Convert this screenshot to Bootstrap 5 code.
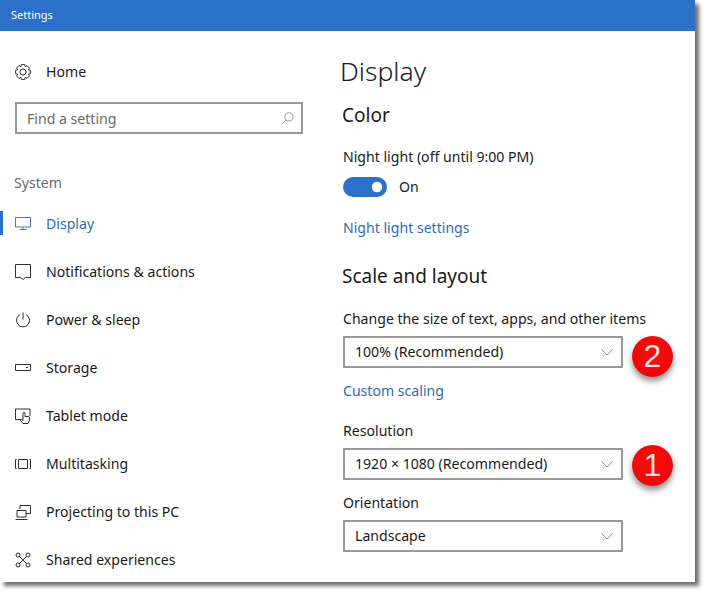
<!DOCTYPE html>
<html lang="en">
<head>
<meta charset="utf-8">
<title>Settings</title>
<link href="https://cdn.jsdelivr.net/npm/bootstrap@5.3.0/dist/css/bootstrap.min.css" rel="stylesheet">
<style>
html,body{height:100%;background:#fff}
body{font-family:"Noto Sans","Open Sans",sans-serif;font-size:14.1px;color:#1a1a1a;line-height:20px;overflow:hidden}
.win{width:695px;height:582px;background:#fff;box-shadow:4px 4px 4px #6e6e6e;overflow:hidden}
.titlebar{height:31px;flex:none;background:#2b70c9;color:#fff;font-size:11px;padding-left:11px;line-height:30px}
.side{width:318px;flex:none}
.home{height:24px;margin-top:29px;padding-left:15px;gap:15px}
.searchbox{margin:18px 15px 0;width:288px;height:32px;position:relative}
.searchbox .form-control{height:32px;border:2px solid #999;border-radius:0;padding:0 10px;font-size:14.1px;color:#666;box-shadow:none;font-family:inherit}
.searchbox .form-control::placeholder{color:#6b6b6b;opacity:1}
.searchbox svg{position:absolute;right:9px;top:10px;color:#777}
.syshead{color:#6b6b6b;margin:39px 0 0 14px;height:20px;line-height:20px}
.sysnav{margin-top:7px}
.sysnav .nav-link{height:48px;padding:0 0 0 15px;display:flex;align-items:center;gap:15px;color:#1a1a1a;position:relative}
.sysnav .nav-link.active{color:#2f6cb5}
.sysnav .nav-link.active::before{content:"";position:absolute;left:0;top:11px;width:3px;height:24px;background:#2b70c9}
.ico{flex:none;fill:none;stroke:currentColor;stroke-width:.9}
.main{padding-left:25px;flex:1;min-width:0}
.main h1{font-size:26.5px;font-weight:300;line-height:36px;margin:22px 0 0 -3px}
.main h2{font-size:19px;font-weight:400;line-height:26px;margin:0 0 0 -1px}
.h-color{margin-top:13px!important}
.lbl{height:20px;margin:0}
.nl{margin-top:19px}
.form-switch{padding:0;margin:10px 0 0;min-height:0;height:20px;display:flex;align-items:center;gap:12px}
.form-switch .form-check-input{width:44px;height:20px;margin:0;border:none;background-color:#2b70c9;border-radius:10px;box-shadow:none;background-image:url("data:image/svg+xml,%3csvg xmlns='http://www.w3.org/2000/svg' viewBox='-4 -4 8 8'%3e%3ccircle r='2.1' fill='%23fff'/%3e%3c/svg%3e")}
.form-switch .form-check-label{color:#1a1a1a}
.link{color:#2f6cb5;text-decoration:none;display:block}
.nlset{margin-top:21px}
.h-scale{margin-top:25px!important}
.chg{margin-top:20px}
.selwrap{width:280px;position:relative;margin-top:7px}
.selwrap .form-select{height:32px;border:2px solid #999;border-radius:0;padding:0 30px 0 10px;font-size:14.1px;color:#1a1a1a;font-family:inherit;box-shadow:none;background-position:right 8px center;background-size:12px 7px;background-image:url("data:image/svg+xml,%3csvg xmlns='http://www.w3.org/2000/svg' viewBox='0 0 12 7'%3e%3cpath fill='none' stroke='%23888' d='M.5.5l5.5 5.5L11.500.5'/%3e%3c/svg%3e")}
.scal{margin-top:13px}
.res{margin-top:20px}
.ori{margin-top:13px}
.pin{position:absolute;left:289px;width:41px;height:41px;border-radius:50%;background:radial-gradient(circle at 50% 40%,#f50d0d 0,#ee0a0a 60%,#d80808 100%);color:#f6dede;font-family:"Liberation Sans",sans-serif;font-size:32px;line-height:41px;text-align:center;box-shadow:0 4px 6px rgba(0,0,0,.45)}
.pin-two{top:0}
.pin-one{top:-3px}
</style>
</head>
<body>
<div class="win d-flex flex-column">
  <div class="titlebar">Settings</div>
  <div class="d-flex flex-grow-1">
    <div class="side">
      <div class="home d-flex align-items-center">
        <svg class="ico" width="16" height="16" viewBox="0 0 16 16"><polygon points="6.29,.6 9.71,.6 10.18,2.73 12.03,1.55 14.45,3.97 13.27,5.82 15.4,6.29 15.4,9.71 13.27,10.18 14.45,12.03 12.03,14.45 10.18,13.27 9.71,15.4 6.29,15.4 5.82,13.27 3.97,14.45 1.55,12.03 2.73,10.18 .6,9.71 .6,6.29 2.73,5.82 1.55,3.97 3.97,1.55 5.82,2.73"/><circle cx="8" cy="8" r="3"/></svg>
        <span>Home</span>
      </div>
      <div class="searchbox">
        <input class="form-control" type="text" placeholder="Find a setting">
        <svg class="ico" width="13" height="13" viewBox="0 0 16 16"><circle cx="9.800" cy="6" r="5"/><path d="M6.200 9.800L.7 15.300"/></svg>
      </div>
      <div class="syshead">System</div>
      <nav class="nav flex-column sysnav">
        <a class="nav-link active" href="#">
          <svg class="ico" width="16" height="16" viewBox="0 0 16 16"><path d="M.5 1.500h15v9.500H.5zM8 11v3M4.500 13.500h7"/></svg>
          <span>Display</span></a>
        <a class="nav-link" href="#">
          <svg class="ico" width="16" height="16" viewBox="0 0 16 16"><path d="M.5.5h15v13h-5L8 15.500 5.500 13.500H.5z"/></svg>
          <span>Notifications &amp; actions</span></a>
        <a class="nav-link" href="#">
          <svg class="ico" width="16" height="16" viewBox="0 0 16 16"><path d="M5.200 2.500a6.500 6.500 0 1 0 5.600 0M8 .5v7"/></svg>
          <span>Power &amp; sleep</span></a>
        <a class="nav-link" href="#">
          <svg class="ico" width="16" height="16" viewBox="0 0 16 16"><path d="M.5 4.500h15v6H.5zM11 7.500h2"/></svg>
          <span>Storage</span></a>
        <a class="nav-link" href="#">
          <svg class="ico" width="16" height="16" viewBox="0 0 16 16"><path d="M6 11.500H.5V1h14.500v7"/><path d="M8 15.500l-2.500-3 1-1 1.500 1V5.500a1 1 0 0 1 2 0V8.500h3.500a1 1 0 0 1 1 1v3l-1.500 3z"/></svg>
          <span>Tablet mode</span></a>
        <a class="nav-link" href="#">
          <svg class="ico" width="16" height="16" viewBox="0 0 16 16"><path d="M3.500 3.500h9v9h-9zM1.500 3.500H.5v9h1M14.500 3.500h1v9h-1"/></svg>
          <span>Multitasking</span></a>
        <a class="nav-link" href="#">
          <svg class="ico" width="16" height="16" viewBox="0 0 16 16"><path d="M5 5V1.500h10.500v8H11"/><path d="M2 6.500h9v6.500H2zM.5 15.500h12"/></svg>
          <span>Projecting to this PC</span></a>
        <a class="nav-link" href="#">
          <svg class="ico" width="16" height="16" viewBox="0 0 16 16"><circle cx="3" cy="3" r="2"/><circle cx="13" cy="3" r="2"/><circle cx="3" cy="13" r="2"/><circle cx="13" cy="13" r="2"/><path d="M4.500 4.500l7 7M11.500 4.500l-7 7"/></svg>
          <span>Shared experiences</span></a>
      </nav>
    </div>
    <div class="main">
      <h1>Display</h1>
      <h2 class="h-color">Color</h2>
      <div class="lbl nl">Night light (off until 9:00 PM)</div>
      <div class="form-check form-switch">
        <input class="form-check-input" type="checkbox" role="switch" id="nl" checked>
        <label class="form-check-label" for="nl">On</label>
      </div>
      <a class="link nlset" href="#">Night light settings</a>
      <h2 class="h-scale">Scale and layout</h2>
      <div class="lbl chg">Change the size of text, apps, and other items</div>
      <div class="selwrap">
        <select class="form-select"><option>100% (Recommended)</option></select>
        <div class="pin pin-two">2</div>
      </div>
      <a class="link scal" href="#">Custom scaling</a>
      <div class="lbl res">Resolution</div>
      <div class="selwrap">
        <select class="form-select"><option>1920 × 1080 (Recommended)</option></select>
        <div class="pin pin-one">1</div>
      </div>
      <div class="lbl ori">Orientation</div>
      <div class="selwrap">
        <select class="form-select"><option>Landscape</option></select>
      </div>
    </div>
  </div>
</div>
<script src="https://cdn.jsdelivr.net/npm/bootstrap@5.3.0/dist/js/bootstrap.bundle.min.js"></script>
</body>
</html>
